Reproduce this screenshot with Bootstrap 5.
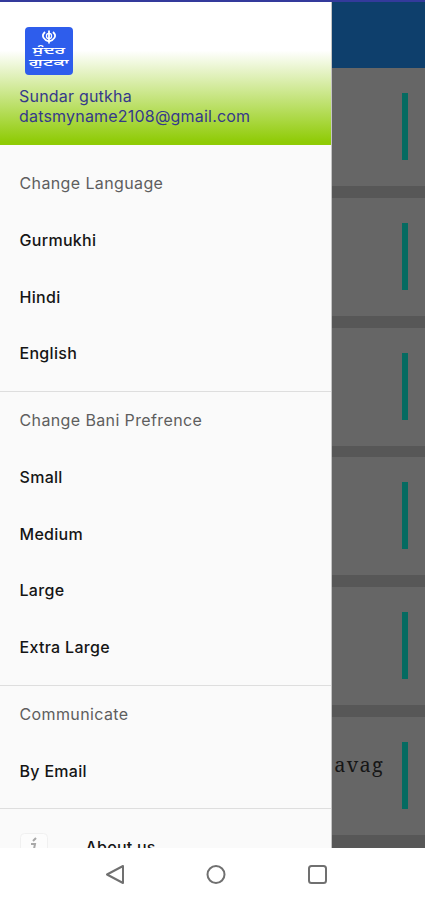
<!DOCTYPE html>
<html lang="en">
<head>
<meta charset="utf-8">
<meta name="viewport" content="width=device-width, initial-scale=1">
<title>Sundar gutkha</title>
<link href="https://cdn.jsdelivr.net/npm/bootstrap@5.3.0/dist/css/bootstrap.min.css" rel="stylesheet">
<style>
body{font-family:Inter,"Liberation Sans",sans-serif;font-size:16px;line-height:20px;background:#fff}
.status{height:2px;background:#343a9c;flex:none}
.screen{height:900px}
.drawer{width:332px;flex:none;background:#fafafa;border-right:1px solid #c4c4c4}
.profile{height:143px;flex:none;padding:25px 20px 0 19px;color:#35398a;background:linear-gradient(#fff 0,#fff 34%,#8fcb05 98%,#8fcb05 100%);letter-spacing:.2px}
.logo{width:48px;height:48px;margin:0 0 11px 6px;display:block}
.profile p{height:20px;margin:0}
.menu-row{height:56.7px;flex:none;padding-left:19.5px;display:flex;align-items:center;font-weight:500;color:#151515;letter-spacing:.3px}
.heading{font-weight:400;color:#5e5e5e;letter-spacing:.38px}
.first-row{margin-top:10px}
.menu-group{border-bottom:1px solid #dedede;flex:none;padding-bottom:9.3px}
.menu-group:first-child{padding-bottom:9.2px}
.about-row{padding-top:19px}
.about-row span{margin-left:38px;letter-spacing:.2px}
.page{background:#575757;color:#161616}
.topbar{height:66px;background:#0e3f6c;flex:none}
.entry{height:118px;margin-bottom:11.8px;flex:none;background:#666;padding-right:17px;padding-bottom:1px;font-family:"Noto Serif","DejaVu Serif","Liberation Serif",serif}
.entry span{font-size:20px;letter-spacing:1.2px;margin-right:18px;margin-top:-20px}
.entry i{width:6px;height:67px;background:#056b61;display:block}
.sysnav{height:52px;flex:none}
.sysnav svg{display:block}
</style>
</head>
<body>
<div class="screen d-flex flex-column overflow-hidden">
<div class="status"></div>
<div class="d-flex flex-grow-1 overflow-hidden">
<aside class="drawer d-flex flex-column overflow-hidden">
<header class="profile">
<svg class="logo" viewBox="0 0 48 48"><rect width="48" height="48" rx="4" fill="#2e5dec"/>
<g fill="none" stroke="#fff" stroke-width="1.8"><path d="M24 3.500v13M20 5c-4.500 4-1 8 4 9.500M28 5c4.500 4 1 8-4 9.500"/><circle cx="24" cy="9" r="2.600" stroke-width="1.200"/></g>
<g fill="#fff" font-family="Noto Sans Gurmukhi,Noto Sans,sans-serif" font-size="9.500" font-weight="600" text-anchor="middle"><text x="24" y="27" textLength="33" lengthAdjust="spacingAndGlyphs">ਸੁੰਦਰ</text><text x="24" y="39" textLength="40" lengthAdjust="spacingAndGlyphs">ਗੁਟਕਾ</text></g></svg>
<p><span>Sundar gutkha</span></p><p><span>datsmyname2108@gmail.com</span></p>
</header>
<nav>
<div class="menu-group"><div class="menu-row heading first-row"><span>Change Language</span></div>
<div class="menu-row"><span>Gurmukhi</span></div><div class="menu-row"><span>Hindi</span></div><div class="menu-row"><span>English</span></div></div>
<div class="menu-group"><div class="menu-row heading"><span>Change Bani Prefrence</span></div><div class="menu-row"><span>Small</span></div><div class="menu-row"><span>Medium</span></div><div class="menu-row"><span>Large</span></div><div class="menu-row"><span>Extra Large</span></div></div>
<div class="menu-group"><div class="menu-row heading"><span>Communicate</span></div><div class="menu-row"><span>By Email</span></div></div>
<div class="menu-row about-row"><svg width="28" height="28" viewBox="0 0 28 28"><rect x=".5" y=".5" width="27" height="27" rx="4" fill="#fcfcfc" stroke="#f0f0f0"/><path d="M13 8l3-3M11 11h4l-2 10" fill="none" stroke="#a8a8a8" stroke-width="2"/></svg><span>About us</span></div>
</nav>
</aside>
<main class="page flex-grow-1 d-flex flex-column overflow-hidden">
<div class="topbar"></div>
<div class="entry d-flex align-items-center justify-content-end"><i></i></div>
<div class="entry d-flex align-items-center justify-content-end"><i></i></div>
<div class="entry d-flex align-items-center justify-content-end"><i></i></div>
<div class="entry d-flex align-items-center justify-content-end"><i></i></div>
<div class="entry d-flex align-items-center justify-content-end"><i></i></div>
<div class="entry d-flex align-items-center justify-content-end"><span>avag</span><i></i></div>
</main>
</div>
<footer class="sysnav bg-white"><svg width="425" height="52" fill="none" stroke="#707070" stroke-width="2" stroke-linejoin="round"><path d="M107 26.500l16-8.500v17z"/><circle cx="216" cy="26.500" r="8.500"/><rect x="309" y="18" width="17" height="17" rx="2.500"/></svg></footer>
</div>
<script src="https://cdn.jsdelivr.net/npm/bootstrap@5.3.0/dist/js/bootstrap.bundle.min.js"></script>
</body>
</html>
